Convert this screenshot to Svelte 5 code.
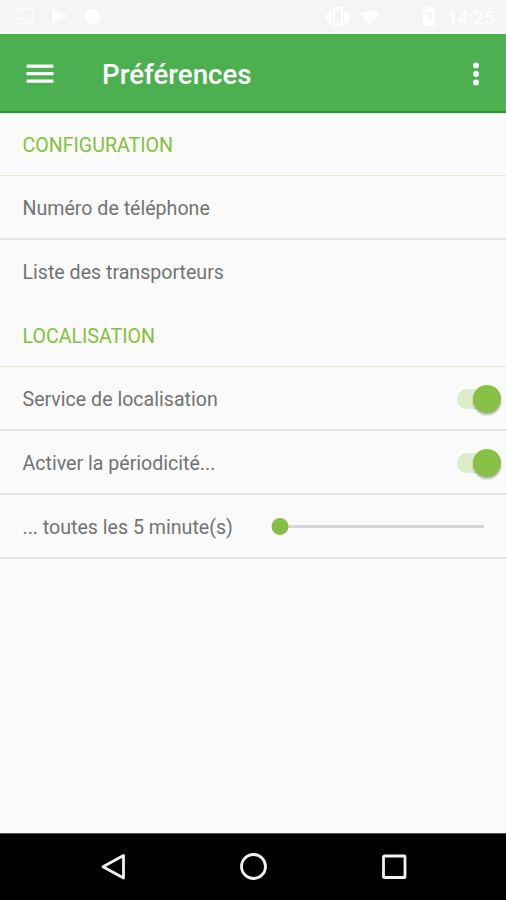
<svelte:options runes={true} />

<script lang="ts">
  let locationEnabled = $state(true);
  let periodic = $state(true);
  let minutes = $state(5);

  const min = 5;
  const max = 60;

  let progress = $derived(((minutes - min) / (max - min)) * 100);

  function onSliderKey(event: KeyboardEvent) {
    if (event.key === "ArrowRight") minutes = Math.min(max, minutes + 5);
    if (event.key === "ArrowLeft") minutes = Math.max(min, minutes - 5);
  }
</script>

{#snippet toggle(checked: boolean, label: string, onclick: () => void)}
  <button
    class="switch"
    class:switch--on={checked}
    role="switch"
    aria-checked={checked}
    aria-label={label}
    {onclick}
  >
    <span class="switch__thumb"></span>
  </button>
{/snippet}

<div class="screen">
  <div class="status">
    <svg width="88" height="20" viewBox="0 0 88 20">
      <path fill="#fcfcfc" fill-rule="evenodd" d="M1 1h17v16H1zM2.500 2.500v13h14v-13zM4 12l3-2 3 3 2-1 3 2H4z" />
      <path fill="#fff" d="M36 1l16 8-16 8z" />
      <path stroke="#f5f5f5" stroke-width="1.500" d="M43 6l4 3-4 4" fill="none" />
      <path fill="#fff" d="M70 4l3-2 4 1 3-2 1 2 3 3v7l-3 4h-7l-5-4V7z" />
    </svg>
    <svg class="status__right" width="114" height="22" viewBox="0 0 114 22">
      <path fill="#fff" fill-rule="evenodd" d="M7 1h10v19H7zM9 4v13h6V4zM3 5h3v12H3L-1 11zM18 5h3l4 6-4 6h-3z" />
      <path fill="#fff" d="M34 7q9-5 19 0L44 20z" />
      <path fill="#fff" fill-rule="evenodd" d="M97 3h3V1h6v2h3v17H97zM100 7v2h4l-2 3v4l4-6V7z" />
    </svg>
    <span class="status__time">14:25</span>
  </div>

  <header class="toolbar">
    <button aria-label="Menu">
      <svg width="28" height="20" viewBox="0 0 28 20">
        <path fill="#fff" d="M0.500 0.500h27v3.200h-27zM0.500 8h27v3.200h-27zM0.500 15.600h27v3.200h-27z" />
      </svg>
    </button>
    <h1>Préférences</h1>
    <button aria-label="Options">
      <svg width="8" height="26" viewBox="0 0 8 26" fill="#fff">
        <circle cx="4" cy="4.500" r="3" />
        <circle cx="4" cy="13" r="3" />
        <circle cx="4" cy="21.500" r="3" />
      </svg>
    </button>
  </header>

  <main>
    <section>
      <h2><span>Configuration</span></h2>
      <div class="row"><span>Numéro de téléphone</span></div>
      <div class="row row--last"><span>Liste des transporteurs</span></div>
    </section>

    <section>
      <h2><span>Localisation</span></h2>
      <div class="row">
        <span>Service de localisation</span>
        {@render toggle(locationEnabled, "Service de localisation", () => (locationEnabled = !locationEnabled))}
      </div>
      <div class="row">
        <span>Activer la périodicité...</span>
        {@render toggle(periodic, "Activer la périodicité", () => (periodic = !periodic))}
      </div>
      <div class="row">
        <span>... toutes les {minutes} minute(s)</span>
        <div
          class="slider"
          role="slider"
          tabindex="0"
          aria-label="Minutes"
          aria-valuemin={min}
          aria-valuemax={max}
          aria-valuenow={minutes}
          onkeydown={onSliderKey}
        >
          <span class="slider__thumb" style="left: {progress}%"></span>
        </div>
      </div>
    </section>
  </main>

  <nav class="navbar">
    <svg width="28" height="30" viewBox="0 0 28 30">
      <path d="M24.500 3.500v22.500L4 14.800z" />
    </svg>
    <svg width="28" height="30" viewBox="0 0 28 30">
      <circle cx="13.500" cy="14.500" r="12" />
    </svg>
    <svg width="28" height="30" viewBox="0 0 28 30">
      <rect x="3.500" y="4" width="21.500" height="21.500" rx="0.800" />
    </svg>
  </nav>
</div>

<style>
  :global(body) {
    margin: 0;
  }

  .screen {
    display: flex;
    flex-direction: column;
    height: 900px;
    overflow: hidden;
    background: #fafafa;
    color: #737373;
    font-family: Roboto, sans-serif;
  }

  button {
    padding: 0;
    border: none;
    background: none;
  }

  svg {
    display: block;
  }

  /* Status bar */
  .status {
    display: flex;
    align-items: center;
    box-sizing: border-box;
    height: 34px;
    padding: 1px 11px 0 16px;
    background: #f5f5f5;
    border-bottom: 1px solid #fdfdfd;
  }

  .status__right {
    margin-left: auto;
  }

  .status__time {
    width: 48px;
    margin-left: 7px;
    color: #fff;
    font-size: 19px;
  }

  /* Toolbar */
  .toolbar {
    display: flex;
    align-items: center;
    box-sizing: border-box;
    height: 79px;
    padding: 3px 26px 0;
    background: #4caf50;
    border-bottom: 2px solid #219c26;
  }

  h1 {
    flex: 1;
    margin: 2px 0 0 48px;
    color: #fff;
    font-size: 27.7px;
    font-weight: 500;
    line-height: 32px;
  }

  /* Preferences */
  main {
    flex: 1;
    margin-top: -1px;
  }

  h2,
  .row {
    display: flex;
    align-items: center;
    justify-content: space-between;
    box-sizing: border-box;
    height: 63.8px;
    margin: 0;
    padding-top: 2px;
    padding-left: 22.5px;
    border-bottom: 2px solid #e2e2e2;
    font-size: 19.6px;
    font-weight: 400;
    white-space: nowrap;
  }

  h2 > span,
  .row > span {
    padding-top: 1.4px;
  }

  h2 {
    color: #84c13c;
    border-bottom: 1px solid #e4e8d0;
    text-transform: uppercase;
  }

  .row--last {
    border-bottom-color: transparent;
  }

  .switch {
    position: relative;
    width: 42px;
    height: 20px;
    margin-right: 7px;
    border-radius: 10px;
    background: #d9d9d9;
  }

  .switch--on {
    background: #dcebc8;
  }

  .switch__thumb {
    position: absolute;
    top: -4px;
    left: -4px;
    width: 28px;
    height: 28px;
    border-radius: 50%;
    background: #f1f1f1;
    box-shadow: 0 2px 2px rgba(0, 0, 0, 0.28);
  }

  .switch--on .switch__thumb {
    left: 16px;
    background: #86c046;
  }

  .slider {
    position: relative;
    width: 204px;
    height: 3px;
    margin-right: 22px;
    background: #d6d8d6;
  }

  .slider__thumb {
    position: absolute;
    top: -7px;
    width: 17px;
    height: 17px;
    border-radius: 50%;
    background: #86c046;
    transform: translateX(-50%);
  }

  /* Navigation bar */
  .navbar {
    display: flex;
    align-items: center;
    justify-content: center;
    gap: 112.5px;
    box-sizing: border-box;
    height: 67px;
    padding-left: 1px;
    border-top: 1px solid #555;
    background: #000;
    fill: none;
    stroke: #f2f2f2;
    stroke-width: 2.8;
    stroke-linejoin: round;
  }
</style>
